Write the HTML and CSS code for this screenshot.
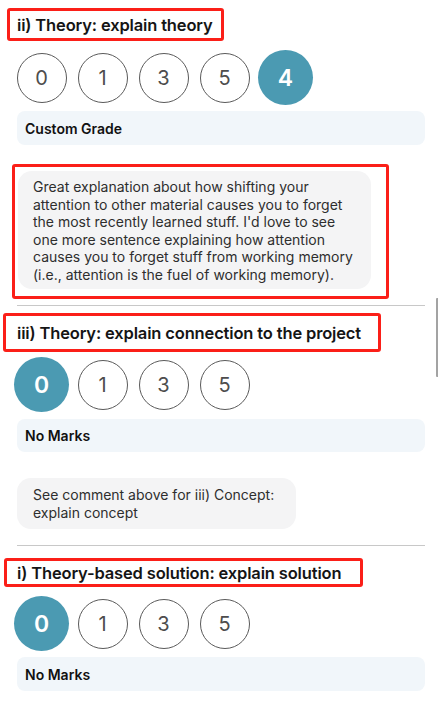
FILE: index.html
```html
<!DOCTYPE html>
<html>
<head>
<meta charset="utf-8">
<link rel="stylesheet" href="styles.css">
</head>
<body>
<div class="page">
  <section class="item">
    <div class="mark mark-t1"><h2 class="title">ii) Theory: explain theory</h2></div>
    <div class="grades g-t1">
      <span class="grade">0</span>
      <span class="grade">1</span>
      <span class="grade">3</span>
      <span class="grade">5</span>
      <span class="grade active">4</span>
    </div>
    <div class="label l-t1">Custom Grade</div>
    <div class="mark mark-b1">
      <div class="bubble b1">Great explanation about how shifting your<br>attention to other material causes you to forget<br>the most recently learned stuff. I'd love to see<br>one more sentence explaining how attention<br>causes you to forget stuff from working memory<br>(i.e., attention is the fuel of working memory).</div>
    </div>
  </section>
  <hr class="divider d1">
  <section class="item">
    <div class="mark mark-t2"><h2 class="title">iii) Theory: explain connection to the project</h2></div>
    <div class="grades g-t2">
      <span class="grade active">0</span>
      <span class="grade">1</span>
      <span class="grade">3</span>
      <span class="grade">5</span>
    </div>
    <div class="label l-t2">No Marks</div>
    <div class="bubble b2">See comment above for iii) Concept:<br>explain concept</div>
  </section>
  <hr class="divider d2">
  <section class="item">
    <div class="mark mark-t3"><h2 class="title">i) Theory-based solution: explain solution</h2></div>
    <div class="grades g-t3">
      <span class="grade active">0</span>
      <span class="grade">1</span>
      <span class="grade">3</span>
      <span class="grade">5</span>
    </div>
    <div class="label l-t3">No Marks</div>
  </section>
</div>
<div class="scrollthumb"></div>
</body>
</html>
```
FILE: styles.css
```css
* { box-sizing: border-box; }
html, body { margin: 0; padding: 0; background: #fff; }
body {
  font-family: Inter, "Noto Sans", "Liberation Sans", sans-serif;
  color: #111;
  width: 438px;
  height: 707px;
  overflow: hidden;
  position: relative;
}
.page {
  padding: 0 13px 0 17px;
  display: flex;
  flex-direction: column;
}
.item { display: flex; flex-direction: column; }

.mark {
  border: 3px solid #fb1f18;
  border-radius: 3px;
  display: flex;
  align-items: center;
}
.title {
  margin: 0;
  font-size: 16.5px;
  font-weight: 600;
  color: #151515;
  letter-spacing: -0.15px;
  white-space: nowrap;
}
.mark-t1 { margin: 8px 0 0 -10px; width: 217px; height: 33px; padding-left: 7px; }
.mark-t2 { margin: 7px 0 0 -14px; width: 378px; height: 39px; padding-left: 11px; }
.mark-t3 { margin: 12px 0 0 -13px; width: 359px; height: 29px; padding-left: 10px; }

.grades { display: flex; gap: 6px; margin-left: -3px; }
.g-t1 { margin-top: 9px; }
.g-t2 { margin-top: 5px; }
.g-t3 { margin-top: 9px; }
.grade {
  width: 50px;
  height: 50px;
  margin: 2.5px;
  border: 1px solid #5a5a5a;
  border-radius: 50%;
  display: flex;
  align-items: center;
  justify-content: center;
  font-size: 20px;
  color: #4d4d4d;
}
.grade.active {
  width: 55px;
  height: 55px;
  margin: 0;
  border: none;
  background: #4b9ab2;
  color: #fff;
  font-size: 23px;
  font-weight: 600;
}

.label {
  background: #f1f6fa;
  border-radius: 8px;
  padding: 0 8px;
  display: flex;
  align-items: center;
  font-size: 14px;
  font-weight: 600;
  color: #111;
}
.l-t1 { margin-top: 6px; height: 34px; }
.l-t2 { margin-top: 7px; height: 33px; }
.l-t3 { margin-top: 6px; height: 34px; }

.bubble {
  background: #f4f4f5;
  border-radius: 14px;
  font-size: 14px;
  line-height: 17.6px;
  color: #2e2e2e;
  width: fit-content;
  white-space: nowrap;
}
.mark-b1 {
  margin: 19px 0 0 -5px;
  width: 377px;
  height: 135px;
  padding: 4px 15px 7px 3px;
  align-items: stretch;
}
.b1 { padding: 7px 18px 5px 15px; width: 353px; }
.b2 { margin-top: 26px; padding: 8px 22px 8px 16px; height: 51px; }

.divider {
  border: none;
  border-top: 1px solid #c8c8c8;
  margin: 0;
  height: 0;
}
.d1 { margin-top: 6px; }
.d2 { margin-top: 16px; }

.scrollthumb {
  position: absolute;
  left: 436px;
  top: 298px;
  width: 2.5px;
  height: 79px;
  background: #a3a3a3;
  border-radius: 1px;
}
```
